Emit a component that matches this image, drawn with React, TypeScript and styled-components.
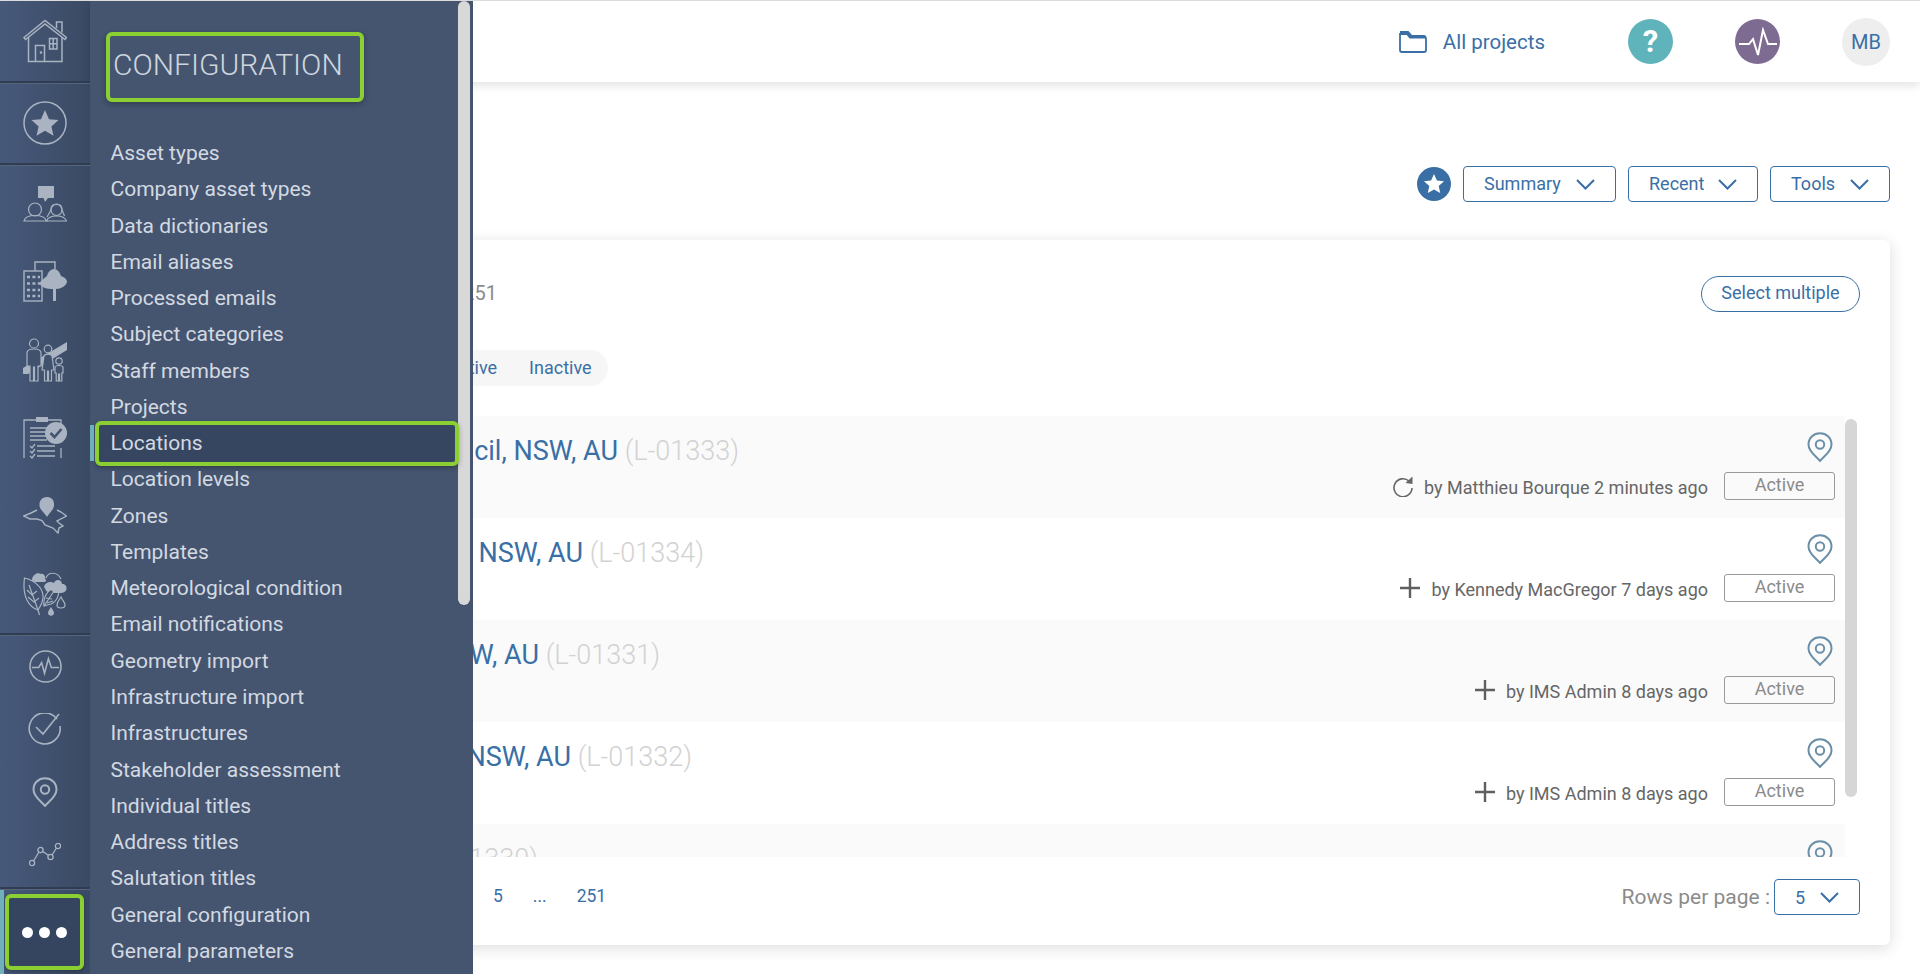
import React from 'react';
import styled, {createGlobalStyle} from "styled-components";

const blue = "#3a6fa6";
const green = "#8ccf32";
const teal = "#6fb0ba";
const railIcon = "#a9b3c1";
const railBg = "#41526e";

const GlobalStyle = createGlobalStyle`
  html, body {
    margin: 0;
    padding: 0;
    background: #fff;
    font-family: Roboto, "Liberation Sans", sans-serif;
  }
  *, *::before, *::after {
    box-sizing: border-box;
  }
`

const configItems = [
    "Asset types", "Company asset types", "Data dictionaries", "Email aliases", "Processed emails",
    "Subject categories", "Staff members", "Projects", "Locations", "Location levels", "Zones", "Templates",
    "Meteorological condition", "Email notifications", "Geometry import", "Infrastructure import",
    "Infrastructures", "Stakeholder assessment", "Individual titles", "Address titles", "Salutation titles",
    "General configuration", "General parameters",
];

const rows = [
    {name: "Lismore City Council, NSW, AU", code: "L-01333", end: 579, by: "by Matthieu Bourque 2 minutes ago", updated: true},
    {name: "Dubbo, NSW, AU", code: "L-01334", end: 544, by: "by Kennedy MacGregor 7 days ago"},
    {name: "Albury, NSW, AU", code: "L-01331", end: 500, by: "by IMS Admin 8 days ago"},
    {name: "Orange, NSW, AU", code: "L-01332", end: 532, by: "by IMS Admin 8 days ago"},
    {name: "Wagga", code: "L-01330", end: 378},
];

const Chevron = () => (
    <svg width="19" height="11" viewBox="0 0 19 11" fill="none" stroke={blue} strokeWidth="2">
        <polyline points="1,1 9.5,9.5 18,1"/>
    </svg>
);

const PinIcon = ({color, w, h}: { color: string, w: number, h: number }) => (
    <svg width={w} height={h} viewBox="0 0 26 30" fill="none" stroke={color} strokeWidth="2">
        <path d="M13 29 C10 25 1.5 20 1.5 12.5 C1.5 6 6.5 1.2 13 1.2 C19.5 1.2 24.5 6 24.5 12.5 C24.5 20 16 25 13 29 Z"/>
        <circle cx="13" cy="12.5" r="4.2"/>
    </svg>
);

const HomeIcon = () => (
    <svg width="44" height="44" viewBox="0 0 44 44" fill="none" stroke={railIcon} strokeWidth="1.5">
        <path d="M1 18.5 L22 1.5 L43.5 18.5 L42 20.5 L22 5 L2.5 20.5 Z"/>
        <path d="M33.5 9 V3 H39 V13.5"/>
        <path d="M5.5 18 V42.5 H39 V18"/>
        <path d="M12.5 42.5 V26.5 H21.5 V42.5"/>
        <rect x="26.5" y="19.5" width="7.5" height="10.5"/>
        <path d="M30.2 19.5 V30 M26.5 24.7 H34"/>
        <circle cx="18" cy="33.5" r=".6" fill={railIcon}/>
    </svg>
);

const StarBadgeIcon = () => (
    <svg width="44" height="44" viewBox="0 0 44 44" fill="none" stroke={railIcon} strokeWidth="1.5">
        <circle cx="22" cy="22" r="21"/>
        <path fill={railIcon} stroke="none" d="M22 9 L26 18.2 L35.5 19 L28.4 25.4 L30.5 34.8 L22 29.8 L13.5 34.8 L15.6 25.4 L8.5 19 L18 18.2 Z"/>
    </svg>
);

const PeopleIcon = () => (
    <svg width="44" height="37" viewBox="0 0 44 37" fill="none" stroke={railIcon} strokeWidth="1.2">
        <path fill={railIcon} stroke="none" d="M15 1 H31 V13 H25 L22 17 L20.500 13 H15 Z"/>
        <circle cx="12" cy="24.500" r="6.500"/>
        <path d="M1 36 C2 31.500 7 30.500 12 30.500 C17 30.500 22 31.500 23.500 36 Z"/>
        <path d="M28 25 C27 17 40 17 39 25 L41.500 31 M28 25 L24 32"/>
        <circle cx="33.500" cy="25" r="5.500"/>
        <path d="M23.500 36 C25 32 29 31 33.500 31 C38 31 42 32 43.500 36 Z"/>
    </svg>
);

const BuildingIcon = () => (
    <svg width="44" height="41" viewBox="0 0 44 41" fill="none" stroke={railIcon} strokeWidth="1.4">
        <rect x="1" y="10" width="18" height="30"/>
        <path d="M12 10 V1 H32 V8"/>
        <path stroke={railIcon} strokeWidth="2.6" strokeDasharray="3 2.4" d="M4 16 H17 M4 22.5 H17 M4 29 H17 M4 35 H17"/>
        <path fill={railIcon} stroke="none" d="M31 8 C35 8 37 12 38 15 C41 16 44 18 44 21 C43 25 38 28 33 28 V40 H30 V28 C25 28 18 27 16.500 22 C18 19 22 17 24 15 C25 11 28 8 31 8 Z"/>
    </svg>
);

const FamilyIcon = () => (
    <svg width="44" height="44" viewBox="0 0 44 44" fill={railBg} stroke={railIcon} strokeWidth="1.2">
        <path fill={railIcon} stroke="none" d="M44 4 V12 L5 36 H0 V30 Z"/>
        <circle cx="11" cy="5.500" r="4.500"/>
        <path d="M4 28 V15 C4 12 7 11 11 11 C15 11 18 12 18 15 V28 L15 28 V43 H11.500 V29 H10.500 V43 H7 V28 Z"/>
        <circle cx="25" cy="11" r="3.800"/>
        <path d="M21 18 C22 15.500 28 15.500 29 18 L31 32 H28.500 V43 H25.500 V33 H24.500 V43 H21.500 V32 H19 Z"/>
        <circle cx="36" cy="23" r="3.200"/>
        <path d="M32 29 C33 27 39 27 40 29 V35 H38.800 V43 H36.500 V36 H35.500 V43 H33.200 V35 H32 Z"/>
    </svg>
);

const ClipboardIcon = () => (
    <svg width="44" height="43" viewBox="0 0 44 43" fill="none" stroke={railIcon} strokeWidth="1.3">
        <path d="M1 42 V4 H38 V8 M38 32 V42"/>
        <rect x="13" y="1" width="12" height="5" fill={railIcon} stroke="none"/>
        <path d="M7 12 H26 M7 16 H24 M7 20 H24 M7 24 H24 M14 30 H32 M14 35 H32 M14 40 H32"/>
        <path d="M7 30 L9 32 L12 28 M7 35 L9 37 L12 33 M7 40 L9 42 L12 38"/>
        <circle cx="33" cy="17" r="11" fill={railIcon} stroke="none"/>
        <path stroke="#445570" strokeWidth="2.6" d="M27.5 17 L31.5 21 L38.5 13"/>
    </svg>
);

const MapIcon = () => (
    <svg width="44" height="37" viewBox="0 0 44 37" fill="none" stroke={railIcon} strokeWidth="1.4">
        <path fill={railIcon} stroke="none" d="M24 0 C30 0 31.500 5 31 9 C30.500 13 26 16 24 20 C22 16 17 13 16.500 9 C16 5 18 0 24 0 Z"/>
        <path d="M14 13 L8 16 L0.500 19 L7 22 L14 22 L19 23.500 L22 28 L30 31 L35 36 L36 31 L40 29 L36 26 L34 24 L43.500 19 L38 15 L34 13"/>
    </svg>
);

const NatureIcon = () => (
    <svg width="44" height="45" viewBox="0 0 44 45" fill="none" stroke={railIcon} strokeWidth="1.2">
        <path d="M1.500 7 C10 9 21 16 20 27 C19.500 33 17 36 15 39 C6 36 -1 26 1.500 7 Z"/>
        <path d="M6 14 L15 39 L16.500 44 M4 19 L9 24 L14 20 M5 26 L11 31 L16 27"/>
        <path fill={railIcon} stroke="none" d="M9 8 C10 4 14 1 18 3 C20 2 23 5 22 8 C24 9 23 11 21 11 H12 C10 11 9 10 9 8 Z"/>
        <path d="M23 7 C25 1 34 0 38 8"/>
        <path d="M21 35 C20 27 24 19 35 14 C37 22 35 30 28 33 Z M21 35 L31 20 M23 27 L29 28 M24 32 L30 30"/>
        <path fill={railIcon} stroke="none" d="M21 16 C22 11 28 10 31 12 C33 7 39 9 39 13 C42 13 44 15 43.500 18 C43 21 40 22 37 22 H31 L28 19 L24 21 Z"/>
        <path d="M38 26 C36 29 34 31 34 34 C34 38 42 38 42 34 C42 31 39 29 38 26 Z"/>
        <path fill={railIcon} stroke="none" d="M28 36 C26 39 25 40 25 42 C25 45.500 31 45.500 31 42 C31 40 29 38 28 36 Z"/>
    </svg>
);

const PulseIcon = ({color, width}: { color: string, width: number }) => (
    <svg width={width} height={width} viewBox="0 0 34 34" fill="none" stroke={color} strokeWidth="1.6">
        <circle cx="17" cy="17" r="16"/>
        <path d="M3 18 H10 L13 13 L16 24 L20 9 L23 18 H31"/>
    </svg>
);

const CheckIcon = () => (
    <svg width="34" height="33" viewBox="0 0 34 33" fill="none" stroke={railIcon} strokeWidth="1.6">
        <path d="M29 6 A15.500 15.500 0 1 0 32 13"/>
        <path d="M8 14 L15 21 L31 1"/>
    </svg>
);

const GraphIcon = () => (
    <svg width="32" height="24" viewBox="0 0 32 24" fill="none" stroke={railIcon} strokeWidth="1.3">
        <circle cx="3" cy="20" r="2.600"/>
        <circle cx="11.500" cy="7" r="2.600"/>
        <circle cx="21.500" cy="14" r="2.600"/>
        <circle cx="29" cy="3" r="2.600"/>
        <path d="M4.500 18 L10 9 M14 8.500 L19.500 12.500 M23 12 L27.500 5"/>
    </svg>
);

const FolderIcon = () => (
    <svg width="28" height="23" viewBox="0 0 28 23" fill="none" stroke={blue} strokeWidth="1.8">
        <path d="M1 4 V20 C1 21.500 1.500 22 3 22 H25 C26.500 22 27 21.500 27 20 V9 C27 8 26.500 7.500 25.500 7.500 H11 L8 4 Z"/>
        <path fill={blue} stroke="none" d="M1 1 H9.500 L13 5 H25 C26.500 5 27.500 6 27.500 8 H11 L8 4.500 H1 Z"/>
    </svg>
);

const RefreshIcon = () => (
    <svg width="20" height="21" viewBox="0 0 20 21" fill="none" stroke="#666" strokeWidth="1.6">
        <path d="M16 5 A9 9 0 1 0 19 12"/>
        <path fill="#666" stroke="none" d="M19.500 0.500 L19.500 8 L12.500 7 Z"/>
    </svg>
);

const PlusIcon = () => (
    <svg width="20" height="20" viewBox="0 0 20 20" stroke="#5f5f5f" strokeWidth="2.4">
        <path d="M0 10 H20 M10 0 V20"/>
    </svg>
);

const App = () => {
    return (
        <Page>
            <GlobalStyle/>
            <Rail>
                <RailSection $height={82}><HomeIcon/></RailSection>
                <RailSection $height={82}><StarBadgeIcon/></RailSection>
                <RailSection $height={471}>
                    <RailItem $height={78}><PeopleIcon/></RailItem>
                    <RailItem $height={78}><BuildingIcon/></RailItem>
                    <RailItem $height={78}><FamilyIcon/></RailItem>
                    <RailItem $height={78}><ClipboardIcon/></RailItem>
                    <RailItem $height={78}><MapIcon/></RailItem>
                    <RailItem $height={78}><NatureIcon/></RailItem>
                </RailSection>
                <RailSection $height={255}>
                    <RailItem $height={63}><PulseIcon color={railIcon} width={33}/></RailItem>
                    <RailItem $height={63}><CheckIcon/></RailItem>
                    <RailItem $height={63}><PinIcon color={railIcon} w={26} h={30}/></RailItem>
                    <RailItem $height={63}><GraphIcon/></RailItem>
                </RailSection>
                <MoreSection>
                    <MoreButton>
                        <Dot/><Dot/><Dot/>
                    </MoreButton>
                </MoreSection>
            </Rail>

            <ConfigPanel>
                <PanelThumb/>
                <PanelTitle>CONFIGURATION</PanelTitle>
                <ConfigList>
                    {configItems.map((item) => (
                        <ConfigItem key={item} $active={item === "Locations"}>{item}</ConfigItem>
                    ))}
                </ConfigList>
            </ConfigPanel>

            <Main>
                <Header>
                    <ProjectsLink><FolderIcon/>All projects</ProjectsLink>
                    <HelpBadge>?</HelpBadge>
                    <ActivityBadge><PulseLine viewBox="0 0 38 30" fill="none" stroke="#fff" strokeWidth="2"><path d="M0 17 H10 L14 12 L19 28 L24 3 L29 17 H38"/></PulseLine></ActivityBadge>
                    <UserBadge>MB</UserBadge>
                </Header>

                <Toolbar>
                    <StarButton>
                        <svg width="24" height="24" viewBox="0 0 24 24" fill="#fff">
                            <path d="M12 2 L14.900 8.500 L22 9.300 L16.700 14 L18.200 21 L12 17.400 L5.800 21 L7.300 14 L2 9.300 L9.100 8.500 Z"/>
                        </svg>
                    </StarButton>
                    <ToolButton $width={153}><span>Summary</span> <Chevron/></ToolButton>
                    <ToolButton $width={130}><span>Recent</span> <Chevron/></ToolButton>
                    <ToolButton $width={120}><span>Tools</span> <Chevron/></ToolButton>
                </Toolbar>

                <Card>
                    <CardTop>
                        <Counter>Showing 1 - 5 of 251</Counter>
                        <SelectMultiple>Select multiple</SelectMultiple>
                    </CardTop>
                    <FilterPill>
                        <FilterOption>All</FilterOption>
                        <FilterOption>Active</FilterOption>
                        <FilterOption>Inactive</FilterOption>
                    </FilterPill>

                    <ListArea>
                        <RowsClip>
                            {rows.map((row) => (
                                <Row key={row.code}>
                                    <RowTitle $end={row.end}>{row.name} <RowCode>({row.code})</RowCode></RowTitle>
                                    <RowSide>
                                        <RowPin><PinIcon color="#6b8fa8" w={26} h={30}/></RowPin>
                                        {row.by && (
                                            <RowMeta>
                                                {row.updated ? <RefreshIcon/> : <PlusIcon/>}
                                                <Byline>{row.by}</Byline>
                                                <StatusBox>Active</StatusBox>
                                            </RowMeta>
                                        )}
                                    </RowSide>
                                </Row>
                            ))}
                        </RowsClip>
                        <ListThumb/>
                    </ListArea>

                    <CardFooter>
                        <Pages>
                            <span>5</span><span>...</span><span>251</span>
                        </Pages>
                        <RowsPerPage>
                            Rows per page :
                            <RowsSelect>5 <Chevron/></RowsSelect>
                        </RowsPerPage>
                    </CardFooter>
                </Card>
            </Main>
        </Page>
    );
};

export default App;

const Page = styled.div`
  position: relative;
  display: flex;
  width: 1920px;
  height: 974px;
  overflow: hidden;
  border-top: 1px solid #dcdcdc;
`

const Rail = styled.nav`
  display: flex;
  flex-direction: column;
  flex: 0 0 90px;
  background: linear-gradient(90deg, #47597a 0%, #3a4a64 100%);
`

const RailSection = styled.div<{ $height: number }>`
  display: flex;
  flex-direction: column;
  align-items: center;
  justify-content: center;
  height: ${props => props.$height}px;
  border-bottom: 2px solid #2f3c52;
  box-shadow: 0 1px 0 #56657c;
`

const RailItem = styled.div<{ $height: number }>`
  display: flex;
  align-items: center;
  justify-content: center;
  height: ${props => props.$height}px;
`

const MoreSection = styled.div`
  position: relative;
  flex: 1;
  padding: 4px 5px 4px 5px;
  margin-top: 1px;

  &::before {
    content: "";
    position: absolute;
    left: 0;
    top: 0;
    bottom: 0;
    width: 4px;
    background: ${teal};
  }
`

const MoreButton = styled.div`
  display: flex;
  align-items: center;
  justify-content: center;
  gap: 6px;
  width: 79px;
  height: 76px;
  border: 4px solid ${green};
  border-radius: 6px;
  background: #354560;
  box-shadow: 0 2px 5px rgba(0, 0, 0, 0.3);
`

const Dot = styled.span`
  width: 11px;
  height: 11px;
  border-radius: 50%;
  background: #fff;
`

const ConfigPanel = styled.aside`
  position: absolute;
  left: 90px;
  top: 0;
  bottom: 0;
  width: 383px;
  padding-top: 31px;
  background: #455570;
  z-index: 2;
`

const PanelThumb = styled.div`
  position: absolute;
  top: 0;
  right: 3px;
  width: 12px;
  height: 604px;
  border-radius: 6px;
  background: #d8d8d8;
`

const PanelTitle = styled.h2`
  display: flex;
  align-items: center;
  width: 258px;
  height: 70px;
  margin: 0 0 33px 16px;
  padding: 0 0 5px 3px;
  border: 4px solid ${green};
  border-radius: 6px;
  box-shadow: 0 2px 6px rgba(0, 0, 0, 0.3);
  color: #ced5de;
  font-size: 30px;
  font-weight: 300;
`

const ConfigList = styled.ul`
  margin: 0;
  padding: 0;
  list-style: none;
`

const ConfigItem = styled.li<{ $active?: boolean }>`
  position: relative;
  z-index: 0;
  height: 36.27px;
  padding-left: 20.5px;
  color: #d3d9e1;
  font-size: 21px;
  line-height: 36.27px;

  ${props => props.$active && `
    &::before {
      content: "";
      position: absolute;
      z-index: -1;
      left: 5px;
      top: -4px;
      width: 364px;
      height: 45px;
      border: 4px solid ${green};
      border-radius: 6px;
      background: #364660;
      box-shadow: 0 2px 5px rgba(0, 0, 0, 0.3);
    }
    &::after {
      content: "";
      position: absolute;
      left: 0;
      top: 0;
      width: 4px;
      height: 36px;
      background: ${teal};
    }
  `}
`

const Main = styled.main`
  flex: 1;
  min-width: 0;
`

const Header = styled.header`
  display: flex;
  align-items: center;
  justify-content: flex-end;
  height: 81px;
  padding-right: 30px;
  background: #fff;
  box-shadow: 0 3px 10px rgba(0, 0, 0, 0.12);
`

const ProjectsLink = styled.a`
  display: flex;
  align-items: center;
  gap: 16px;
  margin-right: 83px;
  color: ${blue};
  font-size: 20.5px;
`

const RoundBadge = styled.div`
  display: flex;
  align-items: center;
  justify-content: center;
  width: 45px;
  height: 45px;
  border-radius: 50%;
  color: #fff;
`

const HelpBadge = styled(RoundBadge)`
  margin-right: 62px;
  background: #5fb4bb;
  font-size: 31px;
  font-weight: 700;
`

const ActivityBadge = styled(RoundBadge)`
  margin-right: 62px;
  background: #7e6b92;
`

const PulseLine = styled.svg`
  width: 38px;
  height: 30px;
`

const UserBadge = styled(RoundBadge)`
  width: 48px;
  height: 48px;
  background: #eee;
  color: ${blue};
  font-size: 20px;
`

const Toolbar = styled.div`
  display: flex;
  align-items: center;
  justify-content: flex-end;
  gap: 12px;
  margin-top: 84px;
  padding-right: 30px;
`

const StarButton = styled.div`
  display: flex;
  align-items: center;
  justify-content: center;
  width: 34px;
  height: 34px;
  border-radius: 50%;
  background: ${blue};
`

const ToolButton = styled.button<{ $width: number }>`
  display: flex;
  align-items: center;
  justify-content: space-between;
  width: ${props => props.$width}px;
  height: 36px;
  padding: 0 20px;
  border: 1px solid ${blue};
  border-radius: 4px;
  background: #fff;
  color: ${blue};
  font-family: inherit;
  font-size: 18px;

  span {
    margin-top: -2px;
  }
`

const Card = styled.section`
  display: flex;
  flex-direction: column;
  height: 705px;
  margin: 38px 30px 0 30px;
  padding: 36px 30px 0 30px;
  border-radius: 6px;
  background: #fff;
  box-shadow: 0 3px 16px rgba(0, 0, 0, 0.14);
`

const CardTop = styled.div`
  display: flex;
  align-items: center;
  justify-content: space-between;
  height: 36px;
`

const Counter = styled.div`
  width: 347px;
  padding-bottom: 3px;
  color: #8b8b8b;
  font-size: 20px;
  text-align: right;
`

const SelectMultiple = styled.button`
  width: 159px;
  height: 36px;
  padding: 0 0 3px;
  border: 1px solid ${blue};
  border-radius: 18px;
  background: #fff;
  color: ${blue};
  font-family: inherit;
  font-size: 18px;
`

const FilterPill = styled.div`
  display: flex;
  align-self: flex-start;
  align-items: center;
  height: 36px;
  margin: 38px 0 30px 229px;
  padding-bottom: 2px;
  border-radius: 18px;
  background: #f6f6f6;
`

const FilterOption = styled.span`
  padding: 0 16px;
  color: ${blue};
  font-size: 18px;
`

const ListArea = styled.div`
  display: flex;
  align-items: flex-start;
  height: 441px;
`

const RowsClip = styled.div`
  flex: 1;
  height: 441px;
  overflow: hidden;
`

const ListThumb = styled.div`
  flex: 0 0 12px;
  height: 378px;
  margin: 3px 3px 0 0;
  border-radius: 6px;
  background: #d6d6d6;
`

const Row = styled.article`
  display: flex;
  justify-content: space-between;
  height: 102px;
  padding: 16px 10px 0 10px;

  &:nth-child(odd) {
    background: #fafafa;
  }
`

const RowTitle = styled.div<{ $end: number }>`
  width: ${props => props.$end}px;
  padding-top: 3px;
  color: ${blue};
  font-size: 27px;
  line-height: 32px;
  text-align: right;
  white-space: nowrap;
`

const RowCode = styled.span`
  color: #d2d2d2;
  font-weight: 300;
`

const RowSide = styled.div`
  display: flex;
  flex-direction: column;
  align-items: flex-end;
`

const RowPin = styled.div`
  height: 30px;
  margin: 0 2px 10px 0;
`

const RowMeta = styled.div`
  display: flex;
  align-items: center;
  height: 28px;
`

const Byline = styled.span`
  margin: 2px 16px 0 11px;
  color: #666;
  font-size: 18px;
`

const StatusBox = styled.div`
  width: 111px;
  height: 28px;
  border: 1px solid #999;
  border-radius: 3px;
  color: #8a8a8a;
  font-size: 18px;
  line-height: 24px;
  text-align: center;
`

const CardFooter = styled.footer`
  display: flex;
  align-items: flex-start;
  justify-content: space-between;
  padding-top: 22px;
`

const Pages = styled.div`
  display: flex;
  gap: 30px;
  height: 36px;
  margin-left: 343px;
  color: ${blue};
  font-size: 17.5px;
  line-height: 34px;
`

const RowsPerPage = styled.div`
  display: flex;
  align-items: center;
  gap: 4px;
  color: #8b8b8b;
  font-size: 21px;
`

const RowsSelect = styled.div`
  display: flex;
  align-items: center;
  gap: 15px;
  width: 86px;
  height: 36px;
  padding-left: 20px;
  border: 1px solid ${blue};
  border-radius: 4px;
  color: ${blue};
  font-size: 18px;
`
